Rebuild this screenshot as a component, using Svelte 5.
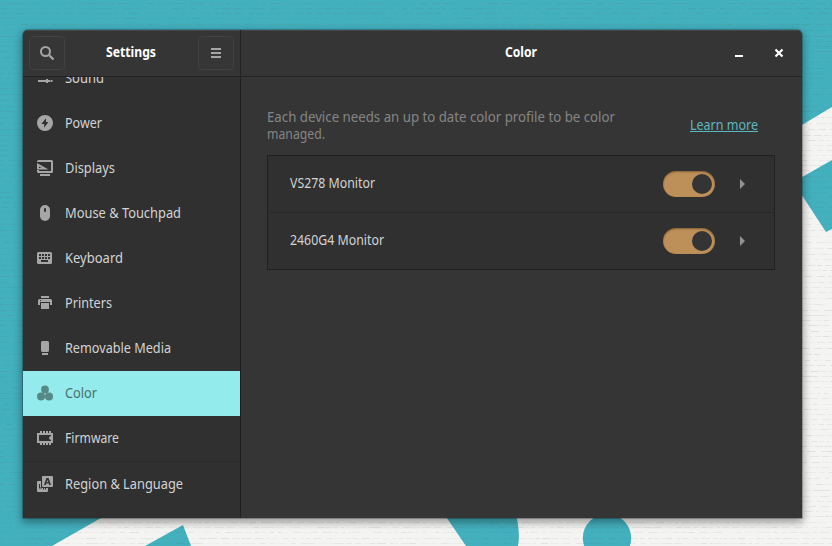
<script>
  const items = [
    { label: 'Sound', icon: 'sound', w: 39 },
    { label: 'Power', icon: 'power', w: 37 },
    { label: 'Displays', icon: 'displays', w: 50 },
    { label: 'Mouse & Touchpad', icon: 'mouse', w: 116 },
    { label: 'Keyboard', icon: 'keyboard', w: 58 },
    { label: 'Printers', icon: 'printers', w: 47 },
    { label: 'Removable Media', icon: 'media', w: 106 },
    { label: 'Color', icon: 'color', w: 32, selected: true },
    { label: 'Firmware', icon: 'firmware', w: 54 },
    { label: 'Region & Language', icon: 'region', w: 118, divided: true }
  ];
  const devices = $state([
    { name: 'VS278 Monitor', on: true, w: 85 },
    { name: '2460G4 Monitor', on: true, w: 94 }
  ]);

  // Short horizontal threads of the canvas-like wallpaper
  let seed = 7;
  const rnd = () => (seed = (seed * 16807) % 2147483647) / 2147483647;
  const threads = [];
  for (let y = 3; y < 546; y += 5 + Math.floor(rnd() * 2)) {
    let x = -rnd() * 20;
    while (x < 832) {
      const len = 2 + rnd() * 8;
      const inWindow = y > 30 && y < 518 && x > 25 && x < 790;
      if (!inWindow) threads.push({ x: Math.round(x), y, w: Math.round(len), o: 0.03 + rnd() * 0.1 });
      x += len + rnd() * 5;
    }
  }
</script>

{#snippet fit(text, w)}
  <svg class="label" width={w} height="20"><text x="0" y="15" textLength={w} lengthAdjust="spacingAndGlyphs">{text}</text></svg>
{/snippet}

{#snippet glyph(name)}
  <svg class="icon" width="16" height="16" viewBox="0 0 16 16" fill="currentColor">
    {#if name === 'sound'}
      <path d="M0 2h5v2H0zM7 1h2v4H7zM10 2h6v2h-6zM1 10h8v2H1zM9 9h2v4H9zM11 10h2v2h-2zM13.500 10h2v2h-2z" />
    {:else if name === 'power'}
      <path fill-rule="evenodd" d="M8 0a8 8 0 1 0 0 16A8 8 0 0 0 8 0zM9 3.200V7h2.400L7.200 12.800V9H4.400z" />
    {:else if name === 'displays'}
      <path fill-rule="evenodd" d="M1.500 0h13A1.500 1.500 0 0 1 16 1.500v10a1.500 1.500 0 0 1-1.500 1.500h-13A1.500 1.500 0 0 1 0 11.500V10h2v1h12V2H0V1.500A1.500 1.500 0 0 1 1.500 0z" />
      <path fill-rule="evenodd" d="M0 3 11.500 9.500H0zM2 6.500v1.500h2.500zM3 14h10v2H3z" />
    {:else if name === 'mouse'}
      <path fill-rule="evenodd" d="M8 0a5 5 0 0 0-5 5v6a5 5 0 0 0 10 0V5a5 5 0 0 0-5-5zM8 3q1 0 1 1v2q0 1-1 1T7 6V4q0-1 1-1z" />
    {:else if name === 'keyboard'}
      <path fill-rule="evenodd" d="M1.500 2h12A1.500 1.500 0 0 1 15 3.500v9a1.500 1.500 0 0 1-1.500 1.500h-12A1.500 1.500 0 0 1 0 12.500v-9A1.500 1.500 0 0 1 1.500 2zM2 4v2h2V4zm3 0v2h2V4zm3 0v2h2V4zm3 0v2h2V4zM2 7v2h2V7zm3 0v2h2V7zm3 0v2h2V7zm3 0v2h2V7zM4 10v2h7v-2z" />
    {:else if name === 'printers'}
      <path d="M4 1h8v2H4z" />
      <path fill-rule="evenodd" d="M2.500 4h11Q15 4 15 5.500V10h-2V7H3v3H1V5.500Q1 4 2.500 4zM3 5v1h1V5z" />
      <path d="M4 8h8v6H4z" />
    {:else if name === 'media'}
      <path d="M5.500 1h5A1.500 1.500 0 0 1 12 2.500v8q0 1.500-2 1.500H6q-2 0-2-1.500v-8A1.500 1.500 0 0 1 5.500 1zM5 13h6v2H5z" />
    {:else if name === 'color'}
      <circle cx="8" cy="4.500" r="3.900" /><circle cx="4" cy="11.500" r="4" /><circle cx="12" cy="11.500" r="4" />
    {:else if name === 'firmware'}
      <path fill-rule="evenodd" d="M3 1h2v2h1V1h2v2h1V1h2v2h1V1h2v2h2v10h-2v2h-2v-2h-1v2H9v-2H8v2H6v-2H5v2H3v-2H0V3h3zM2 5v6h12V10q-2-.5-2-2t2-2V5z" />
    {:else}
      <path fill-rule="evenodd" d="M6 0h9q1 0 1 1v9q0 1-1 1H6q-1 0-1-1V1q0-1 1-1zM9.500 2 7 9h1.800l.4-1.400h2.600l.4 1.400H14l-2.500-7zM10.500 3.800l.8 2.500H9.700z" />
      <path fill-rule="evenodd" d="M1 5h3v6q0 1 1 1h6v3q0 1-1 1H1q-1 0-1-1V6q0-1 1-1zM2 8v4.500h3L4 11.500H3V8zM6 12v1.500h1V12zM8 12v1.500h1V12z" />
    {/if}
  </svg>
{/snippet}

<div class="desktop">
  <svg class="wallpaper" width="832" height="546" viewBox="0 0 832 546">
    <rect width="832" height="546" fill="#43b0be" />
    <g fill="#f4f4f3">
      <path d="M780 138 832 107V546H780z" />
      <path d="M101 518 52 546H832V510H115z" />
    </g>
    <g fill="#43b0be">
      <path d="M790 184 832 160V229L826 232 790 177z" />
      <path d="M183 525 191 546H145z" />
      <path d="M440 508 466 546H518Q521 530 514 508z" />
      <circle cx="607" cy="538" r="24.200" />
    </g>
    {#each threads as t}
      <rect x={t.x} y={t.y} width={t.w} height="1" fill="#5f5f50" opacity={t.o} />
    {/each}
  </svg>

  <main class="window">
    <header>
      <div class="bar-left">
        <button aria-label="Search">
          <svg width="16" height="16" viewBox="0 0 16 16" fill="none" stroke="currentColor" stroke-width="2"><circle cx="6.500" cy="6.500" r="4.500" /><path d="m10.200 10.200 4.300 4.300" stroke-width="2.300" /></svg>
        </button>
        <h1>{@render fit('Settings', 50)}</h1>
        <button aria-label="Menu">
          <svg width="16" height="16" viewBox="0 0 16 16" fill="currentColor"><path d="M3 3h10v2H3zM3 7h10v2H3zM3 11h10v2H3z" /></svg>
        </button>
      </div>
      <div class="bar-right">
        <h1>{@render fit('Color', 32)}</h1>
        <div class="controls">
          <svg width="16" height="16" viewBox="0 0 16 16"><path d="M4 10h8v2H4z" fill="#fff" /></svg>
          <svg width="16" height="16" viewBox="0 0 16 16"><path d="m4.500 4.500 7 7m0-7-7 7" stroke="#fff" stroke-width="2.200" /></svg>
        </div>
      </div>
    </header>
    <div class="body">
      <nav>
        <ul>
          {#each items as item}
            <li class:selected={item.selected} class:divided={item.divided}>
              {@render glyph(item.icon)}
              {@render fit(item.label, item.w)}
            </li>
          {/each}
        </ul>
      </nav>
      <section>
        <div class="intro">
          <p>{@render fit('Each device needs an up to date color profile to be color', 348)}{@render fit('managed.', 58)}</p>
          <a href="#learn">{@render fit('Learn more', 68)}</a>
        </div>
        <div class="devices">
          {#each devices as d}
            <div class="device">
              {@render fit(d.name, d.w)}
              <button class="switch" class:on={d.on} aria-label={d.name} onclick={() => (d.on = !d.on)}><i></i></button>
              <svg width="16" height="16" viewBox="0 0 16 16"><path d="M5 3v10l5-5z" fill="#929292" /></svg>
            </div>
          {/each}
        </div>
      </section>
    </div>
  </main>
</div>

<style>
  .desktop {
    position: relative;
    box-sizing: border-box;
    width: 832px;
    height: 546px;
    padding: 30px 30px 28px 23px;
    overflow: hidden;
    font: 14px 'Noto Sans', 'Open Sans', sans-serif;
    color: #d3d3d3;
  }
  .wallpaper { position: absolute; inset: 0; }
  .window {
    position: relative;
    display: flex;
    flex-direction: column;
    height: 488px;
    border-radius: 5px 5px 0 0;
    background: #353535;
    box-shadow: 0 0 0 1px rgba(0, 0, 0, 0.22), 0 3px 9px 1px rgba(0, 0, 0, 0.4);
    overflow: hidden;
  }
  svg { display: block; flex: none; }
  .label { overflow: visible; }
  .label text { fill: currentColor; }
  header {
    display: flex;
    height: 46px;
    border-bottom: 1px solid #232323;
    box-shadow: inset 0 1px #484848;
  }
  .bar-left {
    box-sizing: border-box;
    display: flex;
    align-items: center;
    justify-content: space-between;
    width: 218px;
    padding: 0 6px;
    border-right: 1px solid #242424;
  }
  .bar-left button {
    box-sizing: border-box;
    display: grid;
    place-items: center;
    width: 36px;
    height: 34px;
    padding: 0;
    border: 1px solid #424242;
    border-radius: 4px;
    background: #363636;
    color: #a5a5a5;
  }
  h1 {
    margin: 0;
    padding: 0 2px 2px 0;
    font-size: 14px;
    font-weight: 700;
    color: #fff;
  }
  .bar-right {
    flex: 1;
    display: grid;
    grid-template-columns: 1fr 34px 1fr;
    align-items: center;
  }
  .bar-right h1 { grid-column: 2; }
  .controls { display: flex; justify-content: flex-end; gap: 24px; padding-right: 15px; }
  .body { display: flex; flex: 1; min-height: 0; }
  nav {
    box-sizing: border-box;
    width: 218px;
    border-right: 1px solid #202020;
    background: #303030;
    overflow: hidden;
  }
  ul { margin: -21px 0 0; padding: 0; list-style: none; }
  li {
    display: flex;
    align-items: center;
    gap: 12px;
    height: 45px;
    padding-left: 14px;
  }
  li .label { margin-top: -1px; }
  .icon { margin-top: -1px; color: #a6a6a6; }
  .selected { background: #94ebeb; color: #49706f; }
  .selected .icon { color: #568886; }
  .divided { border-top: 1px solid #2a2a2a; }
  section { flex: 1; padding: 30px 27px 0 26px; }
  .intro {
    display: flex;
    justify-content: space-between;
    align-items: flex-start;
    height: 48px;
    padding-right: 17px;
  }
  p { margin: 0; color: #858585; }
  p .label { height: 17px; }
  a { margin-top: 8px; color: #5cb8c0; text-decoration: none; }
  a .label { height: 16px; border-bottom: 1px solid #5cb8c0; }
  .devices { border: 1px solid #202020; background: #303030; }
  .device {
    display: flex;
    align-items: center;
    height: 56px;
    padding: 0 23px 0 22px;
  }
  .device + .device { border-top: 1px solid #292929; }
  .device .label { margin-top: -2px; }
  .switch {
    display: flex;
    justify-content: flex-start;
    align-items: center;
    box-sizing: border-box;
    width: 52px;
    height: 26px;
    margin: 0 20px 0 auto;
    padding: 0 3px;
    border: 0;
    border-radius: 13px;
    background: #555;
    box-shadow: inset 0 1px 2px 0 rgba(60, 30, 0, 0.45);
  }
  .switch.on { justify-content: flex-end; background: #be9059; }
  .switch i { width: 20px; height: 20px; border-radius: 50%; background: #343434; }
</style>
